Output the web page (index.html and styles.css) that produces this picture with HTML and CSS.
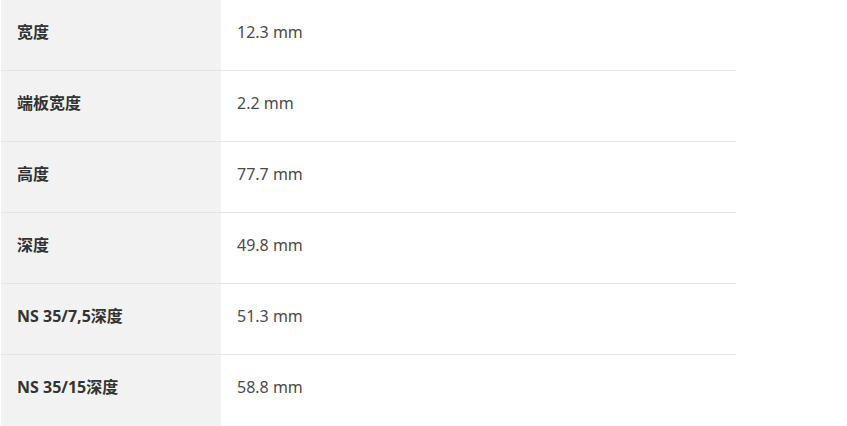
FILE: index.html
```html
<!DOCTYPE html>
<html lang="zh-CN">
<head>
<meta charset="utf-8">
<title>技术参数</title>
<link rel="stylesheet" href="styles.css">
</head>
<body>
<table class="specs">
  <tbody>
    <tr><th class="label">宽度</th><td class="value">12.3 mm</td></tr>
    <tr><th class="label">端板宽度</th><td class="value">2.2 mm</td></tr>
    <tr><th class="label">高度</th><td class="value">77.7 mm</td></tr>
    <tr><th class="label">深度</th><td class="value">49.8 mm</td></tr>
    <tr><th class="label">NS 35/7,5深度</th><td class="value">51.3 mm</td></tr>
    <tr><th class="label">NS 35/15深度</th><td class="value">58.8 mm</td></tr>
  </tbody>
</table>
</body>
</html>
```
FILE: styles.css
```css
html, body {
  margin: 0;
  padding: 0;
  background: #ffffff;
}

body {
  padding-left: 1px;
  font-family: "Noto Sans", "Open Sans", "Noto Sans CJK SC", sans-serif;
  font-size: 16px;
}

.specs {
  width: 735px;
  border-collapse: collapse;
  border-spacing: 0;
}

.specs th,
.specs td {
  height: 70.25px;
  box-sizing: border-box;
  padding: 20px 16px 26px;
  line-height: 24px;
  vertical-align: top;
  text-align: left;
  border-bottom: 1px solid #e3e3e8;
}

.specs tr:last-child th,
.specs tr:last-child td {
  height: 76px;
  border-bottom: none;
}

.label {
  width: 220px;
  background: #f2f2f2;
  color: #333333;
  font-weight: 700;
}

.value {
  color: #4a4a4a;
  font-weight: 400;
}
```
